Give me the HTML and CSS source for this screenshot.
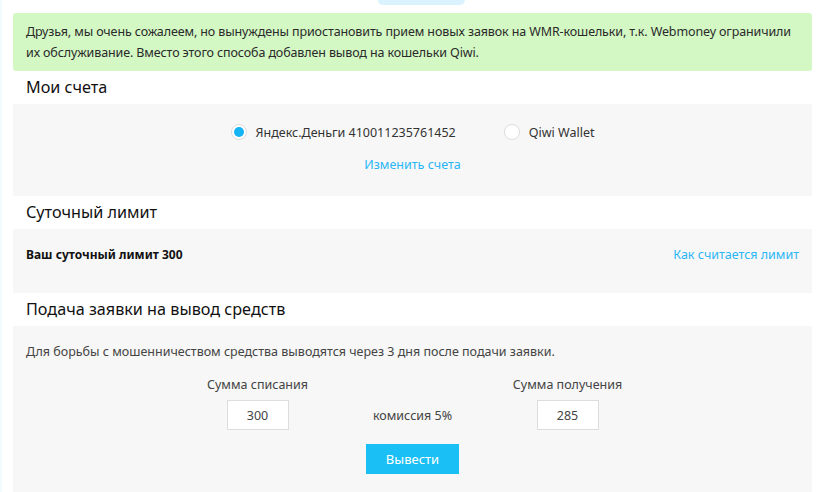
FILE: index.html
```html
<!DOCTYPE html>
<html>
	<head>
		<meta charset="utf-8" />
		<title>Вывод средств</title>
		<link rel="stylesheet" href="styles.css">
	</head>
	<body>
		<div class="top-tab"></div>
		<div id="page">
			<div class="alert">
				Друзья, мы очень сожалеем, но вынуждены приостановить прием новых заявок на WMR-кошельки, т.к. Webmoney ограничили<br>
				их обслуживание. Вместо этого способа добавлен вывод на кошельки Qiwi.
			</div>

			<h2 class="title">Мои счета</h2>
			<div class="panel accounts">
				<div class="radios">
					<label class="radio">
						<i class="on"></i>
						<span>Яндекс.Деньги 410011235761452</span>
					</label>
					<label class="radio">
						<i></i>
						<span>Qiwi Wallet</span>
					</label>
				</div>
				<a href="javascript:;" class="link">Изменить счета</a>
			</div>

			<h2 class="title">Суточный лимит</h2>
			<div class="panel limit">
				<b>Ваш суточный лимит 300</b>
				<a href="javascript:;" class="link">Как считается лимит</a>
			</div>

			<h2 class="title">Подача заявки на вывод средств</h2>
			<div class="panel order">
				<p class="note">Для борьбы с мошенничеством средства выводятся через 3 дня после подачи заявки.</p>
				<div class="sums">
					<span class="cap">Сумма списания</span>
					<span></span>
					<span class="cap">Сумма получения</span>
					<input type="text" value="300">
					<span class="fee">комиссия 5%</span>
					<input type="text" value="285">
				</div>
				<div class="btn-row">
					<a href="javascript:;" class="btn">Вывести</a>
				</div>
			</div>
		</div>
	</body>
</html>
```

FILE: styles.css
```css
body,h2,p{
	margin: 0;
	padding: 0;
}
body{
	font-family: "Noto Sans", "Open Sans", sans-serif;
	color: #222;
	background: #fff;
	border-left: 2px solid #f2fbff;
}
a{
	text-decoration: none;
	color: #29b6f6;
}
.top-tab{
	width: 87px;
	height: 5px;
	margin-left: 376px;
	background: #dbf3fe;
	border-radius: 0 0 6px 6px;
}
#page{
	width: 799px;
	margin-left: 11px;
	padding-top: 8px;
}
.alert{
	background: #d4f8c4;
	border-radius: 3px;
	padding: 8px 10px 8px 13px;
	font-size: 12.5px;
	letter-spacing: -0.12px;
	line-height: 21px;
	color: #2a2a2a;
}
.title{
	height: 33px;
	line-height: 33px;
	padding-left: 13px;
	font-size: 16.2px;
	font-weight: normal;
	color: #111;
}
.panel{
	background: #f7f7f7;
	padding: 0 13px;
	font-size: 12.5px;
}
.accounts{
	height: 92px;
	display: flex;
	flex-direction: column;
	align-items: center;
	padding-top: 19px;
	box-sizing: border-box;
}
.radios{
	display: flex;
	gap: 48px;
	height: 18px;
	align-items: center;
}
.radio{
	display: flex;
	align-items: center;
	gap: 9px;
	color: #333;
}
.radio i{
	width: 14px;
	height: 14px;
	border: 1px solid #ddd;
	border-radius: 50%;
	background: #fff;
	box-sizing: content-box;
	position: relative;
}
.radio i.on::after{
	content: "";
	position: absolute;
	left: 2px;
	top: 2px;
	width: 10px;
	height: 10px;
	border-radius: 50%;
	background: #16b4f5;
}
.accounts .link{
	margin-top: 16px;
	line-height: 16px;
}
.limit{
	height: 64px;
	display: flex;
	justify-content: space-between;
	padding-top: 18px;
	box-sizing: border-box;
	line-height: 16px;
}
.limit b{
	font-size: 12px;
	color: #111;
}
.order{
	height: 166px;
	padding-top: 18px;
	box-sizing: border-box;
	color: #444;
}
.note{
	line-height: 16px;
}
.sums{
	display: grid;
	grid-template-columns: 155px 155px 155px;
	justify-content: center;
	justify-items: center;
	align-items: center;
	row-gap: 7px;
	margin-top: 17px;
}
.cap{
	line-height: 16px;
	color: #444;
}
.sums input{
	width: 62px;
	height: 30px;
	box-sizing: border-box;
	border: 1px solid #ddd;
	background: #fff;
	text-align: center;
	font-family: inherit;
	font-size: 12.5px;
	color: #444;
	padding: 0;
	outline: none;
}
.fee{
	color: #444;
}
.btn-row{
	display: flex;
	justify-content: center;
	margin-top: 14px;
}
.btn{
	width: 93px;
	height: 30px;
	line-height: 30px;
	text-align: center;
	background: #1ac0f5;
	color: #fff;
	font-size: 13px;
}
```
